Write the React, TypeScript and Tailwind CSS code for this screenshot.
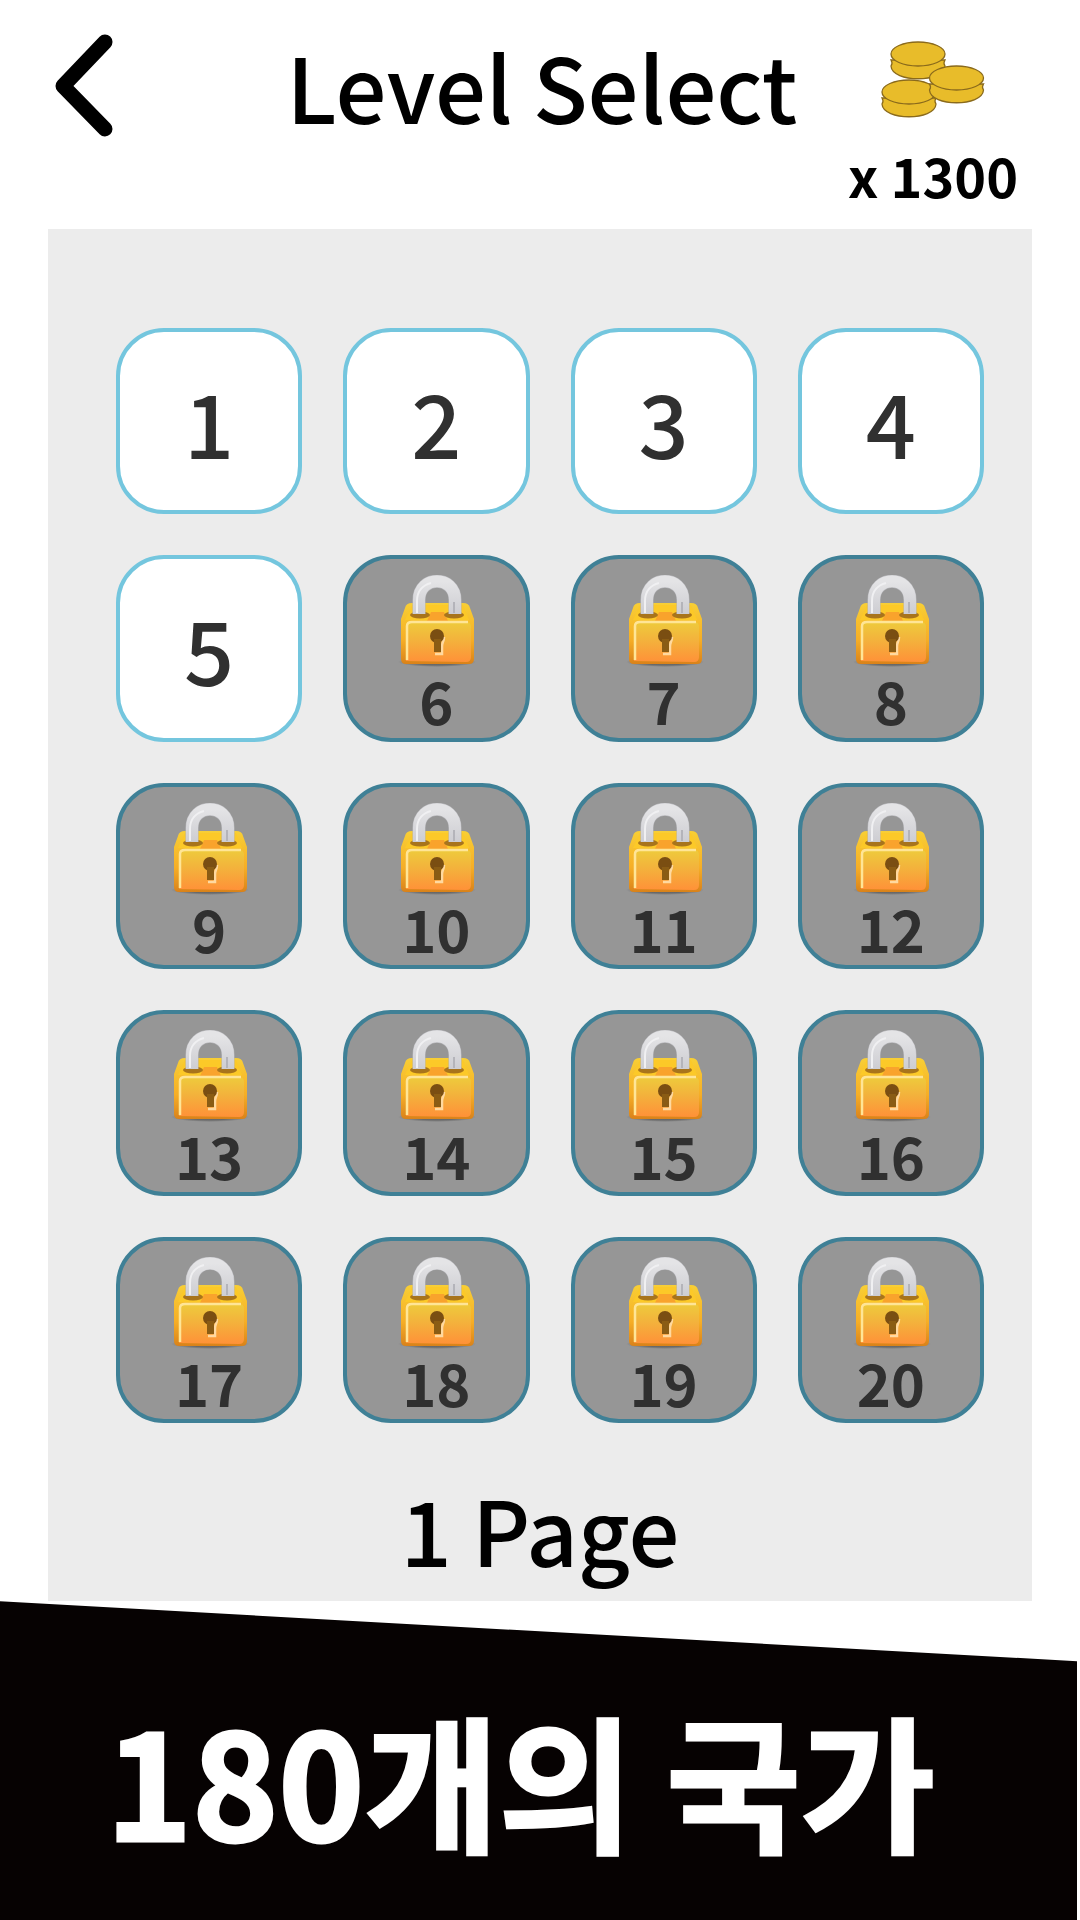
import React from "react";

function BackIcon() {
  return (
    <svg viewBox="0 0 60 104" className="h-[104px] w-[60px]" aria-hidden="true">
      <path d="M51 8 9 52l42 43" fill="none" stroke="#000" strokeWidth="15" strokeLinecap="round" strokeLinejoin="round" />
    </svg>
  );
}

function Coin({ x, y }: { x: number; y: number }) {
  return (
    <g transform={`translate(${x} ${y})`} fill="#e8bc2a" stroke="#8a6a1c" strokeWidth="1.3">
      <path d="M-27 6Q-25 9-27 12C-26 29 26 29 27 12Q25 9 27 6Z" />
      <ellipse cx="0" cy="0" rx="27" ry="12" />
    </g>
  );
}

function CoinsIcon() {
  return (
    <svg viewBox="0 0 106 80" className="h-[80px] w-[106px]" aria-hidden="true">
      <Coin x={29} y={52} />
      <Coin x={38} y={14} />
      <Coin x={76.5} y={38} />
    </svg>
  );
}

function LockIcon() {
  return (
    <svg viewBox="0 0 80 92" className="h-[92px] w-[80px]" aria-hidden="true">
      <defs>
        <linearGradient id="lockFace" x1="0" y1="0" x2="0" y2="1">
          <stop offset="0" stopColor="#eecb3c" />
          <stop offset="0.45" stopColor="#f3b23c" />
          <stop offset="1" stopColor="#ff9138" />
        </linearGradient>
        <linearGradient id="lockEdge" x1="0" y1="0" x2="0" y2="1">
          <stop offset="0" stopColor="#f8cf35" />
          <stop offset="0.6" stopColor="#f6ae26" />
          <stop offset="1" stopColor="#d9821a" />
        </linearGradient>
        <linearGradient id="lockSteel" x1="0" y1="0" x2="0" y2="1">
          <stop offset="0" stopColor="#e4e4e6" />
          <stop offset="1" stopColor="#cdcdd2" />
        </linearGradient>
        <radialGradient id="lockShade">
          <stop offset="0.6" stopColor="#555" stopOpacity="0.7" />
          <stop offset="1" stopColor="#555" stopOpacity="0" />
        </radialGradient>
      </defs>
      <ellipse cx="41" cy="87" rx="39" ry="5" fill="url(#lockShade)" />
      <path d="M16 28h51q6 0 7 5l4 11v40q0 5-5 5H10q-5 0-5-5V44l4-11q1-5 7-5Z" fill="url(#lockEdge)" />
      <path d="M16 30h51l6 15H9Z" fill="#fcc928" />
      <path d="M35 37h13l4 9H31Z" fill="#f9a32c" />
      <ellipse cx="24" cy="40" rx="10" ry="3.5" fill="#a8741c" />
      <ellipse cx="58" cy="40" rx="10" ry="3.5" fill="#a8741c" />
      <path d="M23 39V25c0-25 36-25 36 0v14" fill="none" stroke="#b8b8bc" strokeWidth="13" />
      <path d="M23 39V25c0-25 36-25 36 0v14" fill="none" stroke="url(#lockSteel)" strokeWidth="12" />
      <path d="M21 38V26c0-10 6-16 14-18" fill="none" stroke="#f0f0f2" strokeWidth="2" />
      <path d="M58 38V27" fill="none" stroke="#b4b4ba" strokeWidth="2" />
      <path d="M10 86V52q0-5 5-5h55q5 0 5 5v30q0 5-5 5Z" fill="url(#lockFace)" />
      <path d="M11 85V51q0-4 5-4h56" fill="none" stroke="#ffe596" strokeWidth="2.5" />
      <path d="M48 62c0 4-2 6-2 9v8h-7" fill="none" stroke="#ffd9a0" strokeWidth="2.5" />
      <circle cx="41" cy="61" r="7" fill="#7a4e12" />
      <path d="M38 64h7v13h-7Z" fill="#8a5c14" />
    </svg>
  );
}

const UNLOCKED = 5;
const LEVELS = Array.from({ length: 20 }, (_, i) => i + 1);

function LevelTile({ level }: { level: number }) {
  if (level <= UNLOCKED) {
    return (
      <button className="flex aspect-square items-center justify-center rounded-[48px] border-4 border-[#74c6de] bg-white text-[88px] leading-none font-medium text-[#303030]">
        {level}
      </button>
    );
  }
  return (
    <button
      disabled
      className="flex aspect-square flex-col items-center justify-start gap-1 rounded-[48px] border-4 border-[#3f8096] bg-[#969696] pt-4 text-[58px] leading-[58px] font-bold text-[#303030]"
    >
      <LockIcon />
      {level}
    </button>
  );
}

export default function App() {
  return (
    <div className="flex min-h-screen flex-col bg-white font-['Noto_Sans_CJK_KR',sans-serif] text-black">
      <header className="grid h-[229px] grid-cols-[1fr_auto_1fr] items-start pr-[50px] pl-[54px]">
        <button aria-label="Back" className="mt-[34px] justify-self-start">
          <BackIcon />
        </button>
        <h1 className="mt-10 text-[90px] leading-[90px] font-medium">Level Select</h1>
        <div className="mt-10 mr-3 flex flex-col items-center justify-self-end">
          <CoinsIcon />
          <p className="mt-7 text-[54px] leading-[54px] font-bold whitespace-nowrap">x 1300</p>
        </div>
      </header>

      <main className="mx-12 flex flex-col bg-[#ececec] pt-[99px]">
        <div className="grid grid-cols-4 gap-[41px] pr-12 pl-[68px]">
          {LEVELS.map((level) => (
            <LevelTile key={level} level={level} />
          ))}
        </div>
        <p className="mt-[60px] mb-7 text-center text-[90px] leading-[90px] font-medium">1 Page</p>
      </main>

      <footer className="flex flex-1 items-start bg-[#060202] pt-[104px] pl-[106px] [clip-path:polygon(0_0,calc(100%-3px)_60px,calc(100%-3px)_100%,0_100%)]">
        <p className="text-[146px] leading-[146px] font-bold whitespace-nowrap text-white [-webkit-text-stroke:3px_white]">
          180개의 국가
        </p>
      </footer>
    </div>
  );
}
